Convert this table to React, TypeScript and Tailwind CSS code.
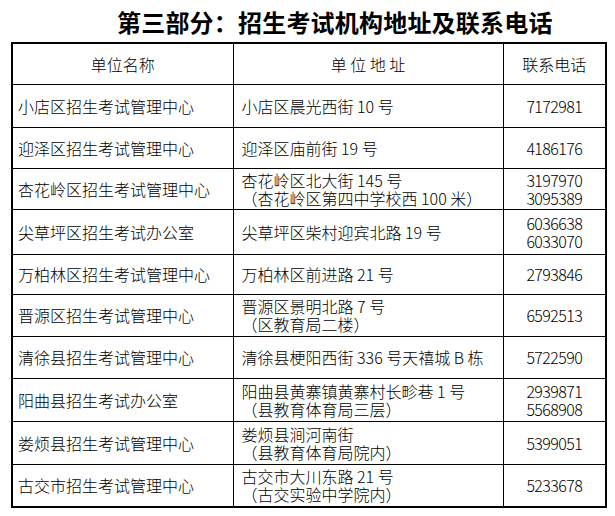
import React from "react";

type Row = {
  name: string;
  address: string[];
  phones: string[];
  h: number;
};

const rows: Row[] = [
  { name: "小店区招生考试管理中心", address: ["小店区晨光西街 10 号"], phones: ["7172981"], h: 43 },
  { name: "迎泽区招生考试管理中心", address: ["迎泽区庙前街 19 号"], phones: ["4186176"], h: 41 },
  {
    name: "杏花岭区招生考试管理中心",
    address: ["杏花岭区北大街 145 号", "（杏花岭区第四中学校西 100 米）"],
    phones: ["3197970", "3095389"],
    h: 41,
  },
  { name: "尖草坪区招生考试办公室", address: ["尖草坪区柴村迎宾北路 19 号"], phones: ["6036638", "6033070"], h: 45 },
  { name: "万柏林区招生考试管理中心", address: ["万柏林区前进路 21 号"], phones: ["2793846"], h: 40 },
  { name: "晋源区招生考试管理中心", address: ["晋源区景明北路 7 号", "（区教育局二楼）"], phones: ["6592513"], h: 42 },
  { name: "清徐县招生考试管理中心", address: ["清徐县梗阳西街 336 号天禧城 B 栋"], phones: ["5722590"], h: 42 },
  {
    name: "阳曲县招生考试办公室",
    address: ["阳曲县黄寨镇黄寨村长畛巷 1 号", "（县教育体育局三层）"],
    phones: ["2939871", "5568908"],
    h: 43,
  },
  { name: "娄烦县招生考试管理中心", address: ["娄烦县涧河南街", "（县教育体育局院内）"], phones: ["5399051"], h: 43 },
  { name: "古交市招生考试管理中心", address: ["古交市大川东路 21 号", "（古交实验中学院内）"], phones: ["5233678"], h: 43 },
];

// 表格统一用 Noto Sans CJK 细体，数字也跟着变细
const cellFont = "font-['Noto_Sans_CJK_SC',sans-serif]";

export default function App() {
  return (
    <div className="h-[516px] w-[615px] bg-white text-black">
      <h1 className="flex h-[42px] items-center pl-[117px] pt-[2px] font-['Noto_Sans_CJK_SC',sans-serif] text-[24px] font-bold leading-none tracking-[0.2px]">
        第三部分：招生考试机构地址及联系电话
      </h1>
      <table className={`ml-[11px] w-[594px] table-fixed border-collapse border-2 border-black text-[16px] font-light ${cellFont}`}>
        <colgroup>
          <col className="w-[221px]" />
          <col className="w-[270px]" />
          <col className="w-[103px]" />
        </colgroup>
        <thead>
          <tr className="h-[41px]">
            <th className="border border-black text-center font-light">单位名称</th>
            <th className="border border-black text-center font-light">单&nbsp;位&nbsp;地&nbsp;址</th>
            <th className="border border-black text-center font-light">联系电话</th>
          </tr>
        </thead>
        <tbody>
          {rows.map((row) => (
            <tr key={row.name} style={{ height: row.h }}>
              <td className="border border-black pl-[5px] align-middle leading-[18px]">{row.name}</td>
              <td className="border border-black pl-[8px] align-middle leading-[18px]">
                {row.address.map((line) => (
                  <div key={line} className="whitespace-pre">
                    {line}
                  </div>
                ))}
              </td>
              <td className="border border-black text-center align-middle text-[16px] leading-[18px] tracking-[-0.6px]">
                {row.phones.map((p) => (
                  <div key={p}>{p}</div>
                ))}
              </td>
            </tr>
          ))}
        </tbody>
      </table>
    </div>
  );
}
